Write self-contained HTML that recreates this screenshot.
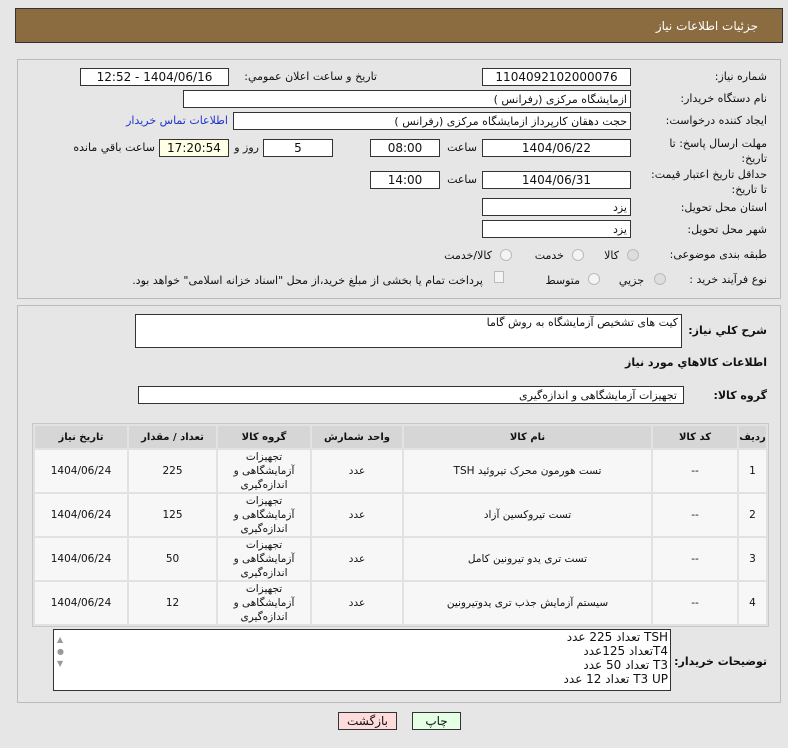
<!DOCTYPE html>
<html><head><meta charset="utf-8"><style>
*{box-sizing:border-box;margin:0;padding:0}
body{width:788px;height:748px;background:#e6e6e6;font-family:"DejaVu Sans","Liberation Sans",sans-serif;font-size:11px;color:#111;position:relative;overflow:hidden;direction:rtl}
.a{position:absolute;white-space:nowrap}
.box{position:absolute;background:#fff;border:1px solid #333;text-align:center;font-size:11px;line-height:17px;white-space:nowrap;overflow:hidden}
.l{position:absolute;white-space:nowrap;text-align:right;font-size:11px}
.rad{position:absolute;width:12px;height:12px;border-radius:50%;border:1px solid #bbb;background:#f4f4f4}
table{position:absolute;left:32px;top:423px;width:737px;border-collapse:separate;border-spacing:2px;background:#e2e2e2;border:1px solid #c8c8c8}
th{background:#d6d6d6;height:22px;font-weight:bold;font-size:10px}
td{background:#f7f7f7;height:41px;text-align:center;font-size:10.5px;line-height:14px}
</style></head><body>
<div class="a" style="left:15px;top:8px;width:768px;height:35px;background:#8b6b40;border:1px solid #333"></div>
<div class="a" style="right:30px;top:19px;color:#fff;font-size:12px">جزئیات اطلاعات نیاز</div>

<div class="a" style="left:17px;top:59px;width:764px;height:240px;border:1px solid #bbb"></div>
<div class="l" style="right:21px;top:70px">شماره نیاز:</div>
<div class="box" style="left:482px;top:68px;width:149px;height:18px;font-size:12px">1104092102000076</div>
<div class="l" style="right:411px;top:70px">تاريخ و ساعت اعلان عمومي:</div>
<div class="box" style="left:80px;top:68px;width:149px;height:18px;font-size:12px">1404/06/16 - 12:52</div>

<div class="l" style="right:21px;top:92px">نام دستگاه خریدار:</div>
<div class="box" style="left:183px;top:90px;width:448px;height:18px;text-align:right;padding-right:3px">ازمایشگاه مرکزی (رفرانس )</div>

<div class="l" style="right:21px;top:114px">ایجاد کننده درخواست:</div>
<div class="box" style="left:233px;top:112px;width:398px;height:18px;text-align:right;padding-right:3px">حجت دهقان کارپرداز ازمایشگاه مرکزی (رفرانس )</div>
<div class="l" style="right:560px;top:114px;color:#2233cc">اطلاعات تماس خریدار</div>

<div class="l" style="right:21px;top:136px;line-height:15px">مهلت ارسال پاسخ: تا<br>تاریخ:</div>
<div class="box" style="left:482px;top:139px;width:149px;height:18px;font-size:12px">1404/06/22</div>
<div class="l" style="right:311px;top:141px">ساعت</div>
<div class="box" style="left:370px;top:139px;width:70px;height:18px;font-size:12px">08:00</div>
<div class="box" style="left:263px;top:139px;width:70px;height:18px;font-size:12px">5</div>
<div class="l" style="right:529px;top:141px">روز و</div>
<div class="box" style="left:159px;top:139px;width:70px;height:18px;background:#ffffe6;font-size:12px">17:20:54</div>
<div class="l" style="right:633px;top:141px">ساعت باقي مانده</div>

<div class="l" style="right:21px;top:167px;line-height:15px">حداقل تاریخ اعتبار قیمت:<br>تا تاریخ:</div>
<div class="box" style="left:482px;top:171px;width:149px;height:18px;font-size:12px">1404/06/31</div>
<div class="l" style="right:311px;top:173px">ساعت</div>
<div class="box" style="left:370px;top:171px;width:70px;height:18px;font-size:12px">14:00</div>

<div class="l" style="right:21px;top:201px">استان محل تحویل:</div>
<div class="box" style="left:482px;top:198px;width:149px;height:18px;text-align:right;padding-right:3px">یزد</div>
<div class="l" style="right:21px;top:223px">شهر محل تحویل:</div>
<div class="box" style="left:482px;top:220px;width:149px;height:18px;text-align:right;padding-right:3px">یزد</div>

<div class="l" style="right:21px;top:248px">طبقه بندی موضوعی:</div>
<div class="rad" style="left:627px;top:249px;background:#ddd"></div><div class="l" style="right:169px;top:249px">کالا</div>
<div class="rad" style="left:572px;top:249px"></div><div class="l" style="right:224px;top:249px">خدمت</div>
<div class="rad" style="left:500px;top:249px"></div><div class="l" style="right:296px;top:249px">کالا/خدمت</div>

<div class="l" style="right:21px;top:273px">نوع فرآیند خرید :</div>
<div class="rad" style="left:654px;top:273px;background:#ddd"></div><div class="l" style="right:144px;top:274px">جزیي</div>
<div class="rad" style="left:588px;top:273px"></div><div class="l" style="right:208px;top:274px">متوسط</div>
<div class="a" style="left:494px;top:271px;width:10px;height:12px;border:1px solid #bbb;background:#f4f4f4"></div>
<div class="l" style="right:305px;top:274px">پرداخت تمام یا بخشی از مبلغ خرید،از محل "اسناد خزانه اسلامی" خواهد بود.</div>

<div class="a" style="left:17px;top:305px;width:764px;height:398px;border:1px solid #bbb"></div>
<div class="l" style="right:21px;top:324px;font-weight:bold">شرح کلي نياز:</div>
<div class="box" style="left:135px;top:314px;width:547px;height:34px;text-align:right;padding-right:3px;line-height:16px">کیت های تشخیص آزمایشگاه به روش گاما</div>
<div class="l" style="right:21px;top:356px;font-weight:bold">اطلاعات کالاهاي مورد نياز</div>
<div class="l" style="right:21px;top:389px;font-weight:bold">گروه کالا:</div>
<div class="box" style="left:138px;top:386px;width:546px;height:18px;text-align:right;padding-right:6px">تجهیزات آزمایشگاهی و اندازه‌گیری</div>

<table>
<tr><th style="width:27px">ردیف</th><th style="width:84px">کد کالا</th><th style="width:247px">نام کالا</th><th style="width:90px">واحد شمارش</th><th style="width:92px">گروه کالا</th><th style="width:87px">تعداد / مقدار</th><th>تاریخ نیاز</th></tr>
<tr><td>1</td><td>--</td><td>تست هورمون محرک تیروئید TSH</td><td>عدد</td><td>تجهیزات<br>آزمایشگاهی و<br>اندازه‌گیری</td><td>225</td><td>1404/06/24</td></tr>
<tr><td>2</td><td>--</td><td>تست تیروکسین آزاد</td><td>عدد</td><td>تجهیزات<br>آزمایشگاهی و<br>اندازه‌گیری</td><td>125</td><td>1404/06/24</td></tr>
<tr><td>3</td><td>--</td><td>تست تری یدو تیرونین کامل</td><td>عدد</td><td>تجهیزات<br>آزمایشگاهی و<br>اندازه‌گیری</td><td>50</td><td>1404/06/24</td></tr>
<tr><td>4</td><td>--</td><td>سیستم آزمایش جذب تری یدوتیرونین</td><td>عدد</td><td>تجهیزات<br>آزمایشگاهی و<br>اندازه‌گیری</td><td>12</td><td>1404/06/24</td></tr>
</table>

<div class="l" style="right:21px;top:655px;font-weight:bold">توضیحات خریدار:</div>
<div class="box" style="left:53px;top:629px;width:618px;height:62px;text-align:right;padding-right:2px;line-height:14px;font-size:12px">TSH تعداد 225 عدد<br>T4تعداد 125عدد<br>T3 تعداد 50 عدد<br>T3 UP تعداد 12 عدد</div>
<div class="a" style="left:57px;top:634px;color:#999;font-size:8px;line-height:12px;direction:ltr">▲<br>●<br>▼</div>

<div class="a" style="left:338px;top:712px;width:59px;height:18px;background:#ffdcdc;border:1px solid #333;text-align:center;font-size:12px;line-height:16px">بازگشت</div>
<div class="a" style="left:412px;top:712px;width:49px;height:18px;background:#e4ffe4;border:1px solid #333;text-align:center;font-size:12px;line-height:16px">چاپ</div>
</body></html>
